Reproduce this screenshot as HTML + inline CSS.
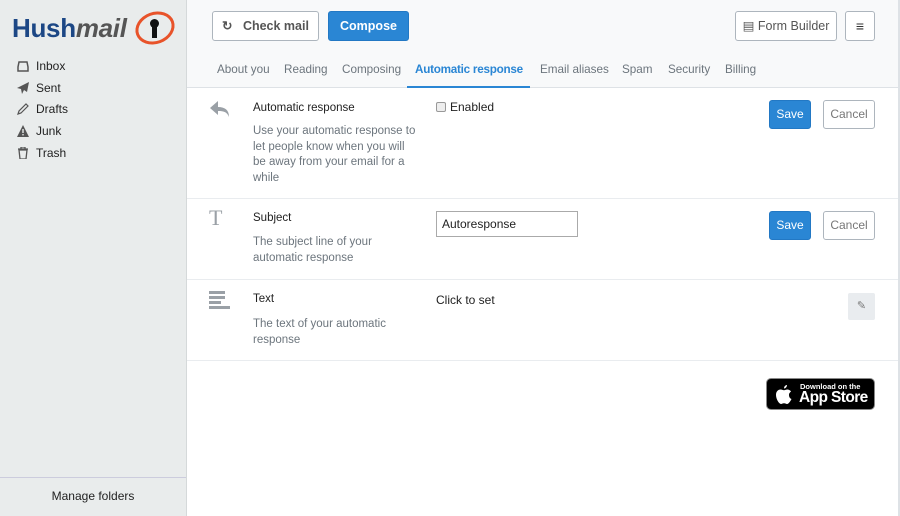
<!DOCTYPE html>
<html><head><meta charset="utf-8"><style>
*{box-sizing:border-box;margin:0;padding:0}
body{width:900px;height:516px;overflow:hidden;font-family:"Liberation Sans",sans-serif;font-size:11.5px;color:#222;background:#fff;position:relative}
.side{position:absolute;left:0;top:0;width:187px;height:516px;background:#e9ecec;border-right:1px solid #d5d9da}
.logo{position:absolute;left:12px;top:13px;font-weight:bold;font-size:26px;letter-spacing:-0.3px;white-space:nowrap}
.logo .h{color:#1c4785}.logo .m{color:#555;font-style:italic}
.ring{position:absolute;left:135px;top:12px;width:40px;height:32px;border:3px solid #e8532a;border-radius:50%;transform:rotate(-20deg)}
.nav{position:absolute;left:17px;top:59px}
.nav div{height:21.7px;line-height:15px;font-size:12px;color:#222;display:flex;align-items:flex-start}
.nav svg{width:12px;height:12px;margin-right:7px;margin-top:1px}
.manage{position:absolute;left:0;bottom:0;width:186px;height:39px;border-top:1px solid #ccd;text-align:center;line-height:37px;color:#222;font-size:12px}
.head{position:absolute;left:187px;top:0;width:711px;height:88px;background:#f8f9fa;border-bottom:1px solid #dee2e6}
.btn{position:absolute;height:30px;border:1px solid #adb5bd;border-radius:3px;background:#fff;font-size:12px;line-height:28px;text-align:center;color:#555;white-space:nowrap}
.blue{background:#2a86d4;border-color:#2278c4;color:#fff;font-weight:bold}
.tabs{position:absolute;left:30px;top:63px;font-size:11.7px;color:#6c757d}
.tabs span{position:absolute;white-space:nowrap}
.rightline{position:absolute;left:898px;top:0;width:2px;height:516px;background:#dee2e6}
.row{position:absolute;left:187px;width:711px;border-bottom:1px solid #e9ecef}
.t{position:absolute;left:66px;font-size:11.5px;color:#222}
.d{position:absolute;left:66px;width:165px;font-size:11.5px;line-height:15.5px;color:#6c757d}
.save{width:42px;height:29px;line-height:27px}
.cancel{width:52px;height:29px;line-height:27px;color:#777}
</style></head><body>
<div class="side">
 <div class="logo"><span class="h">Hush</span><span class="m">mail</span></div>
 <div class="ring"></div>
 <div style="position:absolute;left:150px;top:19px;width:9px;height:9px;border-radius:50%;background:#111"></div>
 <div style="position:absolute;left:152px;top:25px;width:5px;height:13px;background:#111"></div>
 <div class="nav">
  <div><svg viewBox="0 0 12 12"><path d="M2 2h8l1 5v4H1V7z" fill="none" stroke="#555" stroke-width="1.5"/></svg>Inbox</div>
  <div><svg viewBox="0 0 12 12"><path d="M12 0L0 6l4 1 1 5 2-4 3 2z" fill="#555"/></svg>Sent</div>
  <div><svg viewBox="0 0 12 12"><path d="M1 11l1-3 7-7 2 2-7 7z" fill="none" stroke="#555" stroke-width="1.2"/></svg>Drafts</div>
  <div><svg viewBox="0 0 12 12"><path d="M6 0l6 12H0z" fill="#555"/><rect x="5.3" y="4" width="1.4" height="4" fill="#e9ecec"/><rect x="5.3" y="9" width="1.4" height="1.4" fill="#e9ecec"/></svg>Junk</div>
  <div><svg viewBox="0 0 12 12"><path d="M1 2h10M4 2V0h4v2M2 3h8l-1 9H3z" fill="none" stroke="#555" stroke-width="1.3"/></svg>Trash</div>
 </div>
 <div class="manage">Manage folders</div>
</div>
<div class="head">
 <div class="btn" style="left:25px;top:11px;width:107px;font-weight:bold;color:#555;font-size:12.5px">&#x21bb;&nbsp;&nbsp; Check mail</div>
 <div class="btn blue" style="left:141px;top:11px;width:81px;font-size:12.5px">Compose</div>
 <div class="btn" style="left:548px;top:11px;width:102px;font-size:12.5px">&#x25A4; Form Builder</div>
 <div class="btn" style="left:658px;top:11px;width:30px;font-size:14px;color:#333">&#x2261;</div>
 <div class="tabs">
  <span style="left:0">About you</span><span style="left:67px">Reading</span><span style="left:125px">Composing</span>
  <span style="left:198px;top:0;color:#2a86d4;font-weight:bold;font-size:11.7px;letter-spacing:-0.25px">Automatic response</span>
  <span style="left:323px">Email aliases</span><span style="left:405px">Spam</span><span style="left:451px">Security</span><span style="left:508px">Billing</span>
 </div>
 <div style="position:absolute;left:220px;top:86px;width:123px;height:2px;background:#2a86d4"></div>
</div>
<div class="rightline"></div>
<div class="row" style="top:89px;height:110px">
 <svg style="position:absolute;left:22px;top:10px" width="24" height="24" viewBox="0 0 24 24"><path d="M9 2L1 9l8 7v-4c6 0 9 1 11 6 0-7-4-10-11-10z" fill="#9aa0a6"/></svg>
 <div class="t" style="top:13px">Automatic response</div>
 <div class="d" style="top:35px">Use your automatic response to let people know when you will be away from your email for a while</div>
 <div style="position:absolute;left:249px;top:13px;width:10px;height:10px;border:1px solid #999;border-radius:2px;background:#eee"></div>
 <div style="position:absolute;left:263px;top:11px;font-size:12px">Enabled</div>
 <div class="btn blue save" style="left:582px;top:11px;font-weight:normal">Save</div>
 <div class="btn cancel" style="left:636px;top:11px">Cancel</div>
</div>
<div class="row" style="top:199px;height:81px">
 <div style="position:absolute;left:22px;top:6px;font-family:'Liberation Serif',serif;font-size:22px;color:#9aa0a6">T</div>
 <div class="t" style="top:13px">Subject</div>
 <div class="d" style="top:36px">The subject line of your automatic response</div>
 <div style="position:absolute;left:249px;top:12px;width:142px;height:26px;border:1px solid #aaa;padding-left:5px;line-height:24px;font-size:12px">Autoresponse</div>
 <div class="btn blue save" style="left:582px;top:12px;font-weight:normal">Save</div>
 <div class="btn cancel" style="left:636px;top:12px">Cancel</div>
</div>
<div class="row" style="top:280px;height:81px">
 <div style="position:absolute;left:22px;top:11px;width:22px">
  <div style="height:3px;background:#9aa0a6;margin-bottom:2px;width:16px"></div>
  <div style="height:3px;background:#9aa0a6;margin-bottom:2px;width:16px"></div>
  <div style="height:3px;background:#9aa0a6;margin-bottom:2px;width:12px"></div>
  <div style="height:3px;background:#9aa0a6;width:21px"></div>
 </div>
 <div class="t" style="top:13px">Text</div>
 <div class="d" style="top:37px">The text of your automatic response</div>
 <div style="position:absolute;left:249px;top:13px;font-size:12px">Click to set</div>
 <div style="position:absolute;left:661px;top:13px;width:27px;height:27px;background:#e9ecef;border-radius:2px;text-align:center;line-height:27px;color:#777;font-size:11px">&#x270E;</div>
</div>
<div style="position:absolute;left:766px;top:378px;width:109px;height:32px;background:#000;border-radius:5px;border:1px solid #888;color:#fff;white-space:nowrap">
 <svg style="position:absolute;left:9px;top:6px" width="16" height="19" viewBox="0 0 16 19"><path d="M11 0c0 2-1.5 3.5-3 3.5C8 1.5 9.5 0 11 0zM13 10c0-2 1.5-3 2-3.5C14 5 12.5 4.5 11.5 4.5 10 4.5 9 5.3 8 5.3S6 4.5 4.5 4.5C2 4.5 0 6.5 0 10c0 4 3 9 5 9 1 0 1.5-.7 3-.7s2 .7 3 .7c2 0 4-4 4.5-5C14 13.5 13 12 13 10z" fill="#fff"/></svg>
 <div style="position:absolute;left:33px;top:3px;font-size:7.5px;font-weight:bold">Download on the</div>
 <div style="position:absolute;left:32px;top:10px;font-size:15.5px;letter-spacing:-0.6px;font-weight:bold">App Store</div>
</div>
</body></html>
